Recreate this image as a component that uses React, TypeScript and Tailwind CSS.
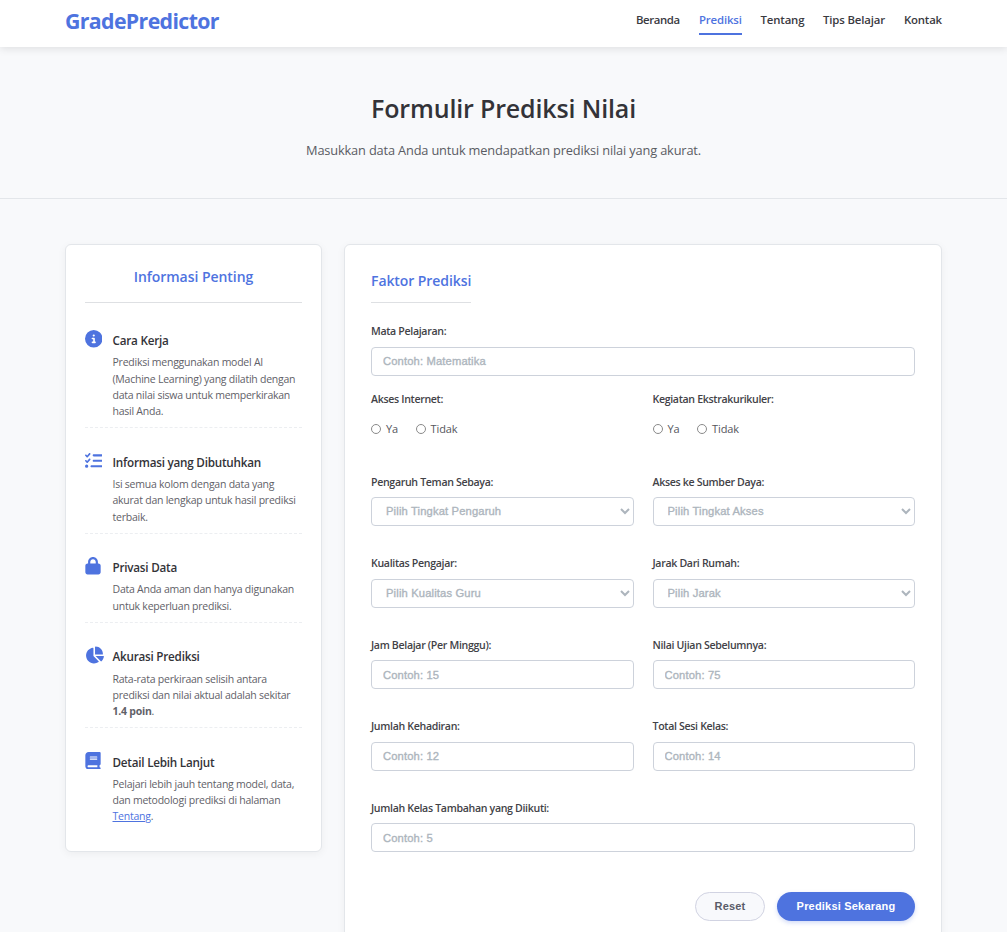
import type { ReactNode } from 'react';
import type { IconType } from 'react-icons';
import { FaBook, FaChartPie, FaCircleInfo, FaListCheck, FaLock } from 'react-icons/fa6';

const navItems = [
  { label: 'Beranda', width: 'w-[44.5px] tracking-[-0.4px]' },
  { label: 'Prediksi', width: 'w-[43px] tracking-[-0.15px]', active: true },
  { label: 'Tentang', width: 'w-[44px] tracking-[-0.15px]' },
  { label: 'Tips Belajar', width: 'w-[62.5px] tracking-[-0.15px]' },
  { label: 'Kontak', width: 'w-[38px] tracking-[-0.2px]' },
];

interface Info {
  icon: IconType;
  iconStyle: string;
  title: string;
  lines: ReactNode[];
}

const infos: Info[] = [
  {
    icon: FaCircleInfo,
    iconStyle: '-ml-[0.5px] size-[17.5px]',
    title: 'Cara Kerja',
    lines: [
      'Prediksi menggunakan model AI',
      '(Machine Learning) yang dilatih dengan',
      'data nilai siswa untuk memperkirakan',
      'hasil Anda.',
    ],
  },
  {
    icon: FaListCheck,
    iconStyle: '-ml-[0.5px] size-[17.5px]',
    title: 'Informasi yang Dibutuhkan',
    lines: ['Isi semua kolom dengan data yang', 'akurat dan lengkap untuk hasil prediksi', 'terbaik.'],
  },
  {
    icon: FaLock,
    iconStyle: 'h-[17.5px] w-4',
    title: 'Privasi Data',
    lines: ['Data Anda aman dan hanya digunakan', 'untuk keperluan prediksi.'],
  },
  {
    icon: FaChartPie,
    iconStyle: '-mt-[0.5px] h-[18px] w-[19px]',
    title: 'Akurasi Prediksi',
    lines: [
      'Rata-rata perkiraan selisih antara',
      'prediksi dan nilai aktual adalah sekitar',
      <>
        <strong className="font-bold">1.4 poin</strong>.
      </>,
    ],
  },
  {
    icon: FaBook,
    iconStyle: 'h-[17.5px] w-4',
    title: 'Detail Lebih Lanjut',
    lines: [
      'Pelajari lebih jauh tentang model, data,',
      'dan metodologi prediksi di halaman',
      <>
        <a href="#tentang" className="text-[#4e73df] underline">Tentang</a>.
      </>,
    ],
  },
];

const control =
  "block h-[29px] w-full rounded border border-[#cdd2db] bg-white font-['Liberation_Sans',sans-serif] text-[11.2px] tracking-[0.15px] text-[#adb5bd] [-webkit-text-stroke:0.35px_#adb5bd] placeholder:text-[#adb5bd] placeholder:opacity-100 outline-none";

function Label({ children }: { children: ReactNode }) {
  return (
    <div className="h-5 whitespace-nowrap text-[10.6px] font-semibold leading-5 tracking-[-0.33px] text-[#424247]">
      {children}
    </div>
  );
}

function TextField({ label, placeholder }: { label: string; placeholder: string }) {
  return (
    <div>
      <Label>{label}</Label>
      <input className={control + ' mt-[5.5px] px-[11px]'} placeholder={placeholder} />
    </div>
  );
}

function SelectField({ label, placeholder }: { label: string; placeholder: string }) {
  return (
    <div>
      <Label>{label}</Label>
      <div className="relative mt-[5.5px]">
        <select className={control + ' appearance-none px-[14px]'}>
          <option>{placeholder}</option>
        </select>
        <svg
          className="pointer-events-none absolute right-1 top-[11px] h-[7px] w-[10px]"
          viewBox="0 0 10 7"
          fill="none"
          stroke="#adb5bd"
          strokeWidth="2"
        >
          <path d="M1 1l4 4 4-4" />
        </svg>
      </div>
    </div>
  );
}

function RadioField({ label, name }: { label: string; name: string }) {
  return (
    <div className="h-[82.8px]">
      <Label>{label}</Label>
      <div className="mt-2.5 flex h-5 items-center text-[11px] leading-5 tracking-[-0.1px] text-[#55565c]">
        <label className="flex w-[44.5px] items-center gap-[5px]">
          <input type="radio" name={name} className="size-2.5 shrink-0 appearance-none rounded-full border border-[#8a8a8a] bg-white" />
          Ya
        </label>
        <label className="flex items-center gap-[5px]">
          <input type="radio" name={name} className="size-2.5 shrink-0 appearance-none rounded-full border border-[#8a8a8a] bg-white" />
          Tidak
        </label>
      </div>
    </div>
  );
}

export default function App() {
  return (
    <div className="h-[932px] w-full overflow-hidden bg-[#f8f9fb] font-['Open_Sans',sans-serif] text-[#333]">
      <header className="relative h-[47px] bg-white shadow-[0_2px_8px_rgba(0,0,0,0.1)]">
        <div className="mx-auto flex w-[877px] items-start justify-between">
          <div className="mt-[5px] text-[21.3px] font-bold leading-8 tracking-[-0.63px] text-[#4e73df]">GradePredictor</div>
          <nav className="mt-[10px] flex gap-[18.5px] text-[11.4px] font-semibold text-[#3a3a3f]">
            {navItems.map((item) => (
              <a
                key={item.label}
                href="#"
                className={
                  'h-[25px] whitespace-nowrap leading-5 ' +
                  item.width +
                  (item.active ? ' border-b-2 border-[#4e73df] text-[#4e73df]' : '')
                }
              >
                {item.label}
              </a>
            ))}
          </nav>
        </div>
      </header>

      <section className="h-[152px] border-b border-[#e3e6ea] pt-[41px] text-center">
        <h1 className="text-[25px] font-semibold leading-10 tracking-[-0.15px] text-[#333338]">Formulir Prediksi Nilai</h1>
        <p className="mt-[11px] text-[12.8px] leading-[22px] tracking-[-0.16px] text-[#5a5c63]">
          Masukkan data Anda untuk mendapatkan prediksi nilai yang akurat.
        </p>
      </section>

      <main className="mx-auto mt-[45px] flex w-[877px] items-start gap-[22px]">
        <aside className="h-[608px] w-[257px] shrink-0 rounded-md border border-[#e3e6ea] bg-white px-[19px] shadow-[0_2px_8px_rgba(0,0,0,0.05)]">
          <h2 className="h-[58px] border-b border-[#dee0e3] pt-[20px] text-center text-[14px] font-semibold leading-6 tracking-[-0.04px] text-[#4e73df]">
            Informasi Penting
          </h2>
          <div className="pt-[3.6px]">
            {infos.map(({ icon: Icon, iconStyle, title, lines }, i) => (
              <div
                key={title}
                className={
                  'flex pb-[7.7px] pt-[23.5px] ' + (i < infos.length - 1 ? 'border-b border-dashed border-[#eceef1]' : '')
                }
              >
                <div className="w-[27.5px] shrink-0">
                  <Icon className={iconStyle + ' text-[#4e73df]'} />
                </div>
                <div className="whitespace-nowrap">
                  <h3 className="text-[11.7px] font-semibold leading-5 tracking-[-0.23px] text-[#333338]">{title}</h3>
                  <p className="mt-[4.3px] text-[10.5px] leading-[16.3px] tracking-[-0.24px] text-[#5f6168]">
                    {lines.map((line, n) => (
                      <span key={n} className="block">{line}</span>
                    ))}
                  </p>
                </div>
              </div>
            ))}
          </div>
        </aside>

        <section className="h-[740px] w-[598px] shrink-0 rounded-md border border-[#e3e6ea] bg-white px-[26px] shadow-[0_2px_8px_rgba(0,0,0,0.05)]">
          <h2 className="inline-block h-[58px] border-b border-[#dee0e3] pt-[24px] text-[14px] font-semibold leading-6 tracking-[-0.08px] text-[#4e73df]">
            Faktor Prediksi
          </h2>
          <div className="mt-[18px] h-[68px]">
            <TextField label="Mata Pelajaran:" placeholder="Contoh: Matematika" />
          </div>
          <div className="grid grid-cols-2 gap-x-[19px]">
            <RadioField label="Akses Internet:" name="internet" />
            <RadioField label="Kegiatan Ekstrakurikuler:" name="ekskul" />
          </div>
          <div className="grid grid-cols-2 gap-x-[19px] gap-y-[27px]">
            <SelectField label="Pengaruh Teman Sebaya:" placeholder="Pilih Tingkat Pengaruh" />
            <SelectField label="Akses ke Sumber Daya:" placeholder="Pilih Tingkat Akses" />
            <SelectField label="Kualitas Pengajar:" placeholder="Pilih Kualitas Guru" />
            <SelectField label="Jarak Dari Rumah:" placeholder="Pilih Jarak" />
            <TextField label="Jam Belajar (Per Minggu):" placeholder="Contoh: 15" />
            <TextField label="Nilai Ujian Sebelumnya:" placeholder="Contoh: 75" />
            <TextField label="Jumlah Kehadiran:" placeholder="Contoh: 12" />
            <TextField label="Total Sesi Kelas:" placeholder="Contoh: 14" />
            <div className="col-span-2">
              <TextField label="Jumlah Kelas Tambahan yang Diikuti:" placeholder="Contoh: 5" />
            </div>
          </div>
          <div className="mt-10 flex justify-end gap-3 font-['Liberation_Sans',sans-serif] text-[11px] font-bold">
            <button className="h-[29px] w-[70px] rounded-full border border-[#d1d3e2] bg-[#f8f9fc] pb-0.5 tracking-[0.2px] text-[#5a5c69]">Reset</button>
            <button className="h-[29px] w-[138px] rounded-full bg-[#4e73df] pb-0.5 tracking-[0.2px] text-white shadow-[0_2px_4px_rgba(78,115,223,0.25)]">
              Prediksi Sekarang
            </button>
          </div>
        </section>
      </main>
    </div>
  );
}
